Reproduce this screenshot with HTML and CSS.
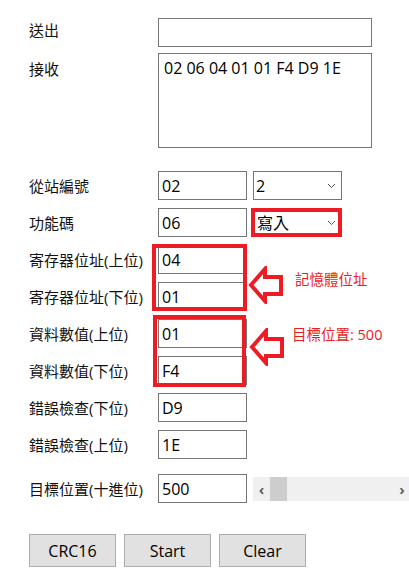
FILE: index.html
```html
<!DOCTYPE html>
<html lang="zh-Hant">
<head>
    <meta charset="UTF-8">
    <meta name="viewport" content="width=device-width, initial-scale=1.0">
    <title>Modbus 工具</title>
    <link rel="stylesheet" href="styles.css">
</head>
<body>
<div class="page">
    <div class="row row-send">
        <label class="lbl" for="send">送出</label>
        <input type="text" id="send" class="wide">
    </div>
    <div class="row row-recv">
        <label class="lbl" for="recv">接收</label>
        <textarea id="recv" class="wide">02 06 04 01 01 F4 D9 1E</textarea>
    </div>

    <div class="fields">
        <div class="row">
            <label class="lbl">從站編號</label>
            <input type="text" class="small" value="02">
            <span class="sel">
                <select><option>2</option></select>
                <svg class="chev" width="9" height="6" viewBox="0 0 9 6"><path d="M1 1 L4.5 4.5 L8 1" fill="none" stroke="#555" stroke-width="1"/></svg>
            </span>
        </div>
        <div class="row">
            <label class="lbl">功能碼</label>
            <input type="text" class="small" value="06">
            <span class="sel">
                <select class="marked"><option>寫入</option></select>
                <svg class="chev" width="9" height="6" viewBox="0 0 9 6"><path d="M1 1 L4.5 4.5 L8 1" fill="none" stroke="#555" stroke-width="1"/></svg>
            </span>
        </div>
        <div class="row">
            <label class="lbl">寄存器位址(上位)</label>
            <input type="text" class="small" value="04">
        </div>
        <div class="row">
            <label class="lbl">寄存器位址(下位)</label>
            <input type="text" class="small" value="01">
        </div>
        <div class="row">
            <label class="lbl">資料數值(上位)</label>
            <input type="text" class="small" value="01">
        </div>
        <div class="row">
            <label class="lbl">資料數值(下位)</label>
            <input type="text" class="small" value="F4">
        </div>
        <div class="row">
            <label class="lbl">錯誤檢查(下位)</label>
            <input type="text" class="small" value="D9">
        </div>
        <div class="row">
            <label class="lbl">錯誤檢查(上位)</label>
            <input type="text" class="small" value="1E">
        </div>
    </div>

    <div class="row row-target">
        <label class="lbl">目標位置(十進位)</label>
        <input type="text" class="small" value="500">
        <div class="hscroll">
            <span class="arr">&#8249;</span>
            <span class="thumb"></span>
            <span class="arr arr-r">&#8250;</span>
        </div>
    </div>

    <div class="buttons">
        <button class="btn">CRC16</button>
        <button class="btn">Start</button>
        <button class="btn">Clear</button>
    </div>

    <!-- annotations drawn over the form -->
    <div class="box box1"></div>
    <div class="box box2"></div>
    <svg class="arrow arrow1" width="36" height="38" viewBox="0 0 36 38"><polygon points="3,19 17,3 17,11 33,11 33,28 17,28 17,35" fill="none" stroke="#ed1c24" stroke-width="4" stroke-linejoin="miter"/></svg>
    <svg class="arrow arrow2" width="36" height="38" viewBox="0 0 36 38"><polygon points="3,19 17,3 17,11 33,11 33,28 17,28 17,35" fill="none" stroke="#ed1c24" stroke-width="4" stroke-linejoin="miter"/></svg>
    <div class="note note1">記憶體位址</div>
    <div class="note note2">目標位置: 500</div>
</div>
</body>
</html>
```

FILE: styles.css
```css
body {
    margin: 0;
    padding: 0;
    font-family: "Open Sans", "Noto Sans CJK TC", sans-serif;
    color: #000;
    background: #fff;
}
.page {
    position: relative;
    padding: 18px 0 0 29px;
    height: 559px;
}
.row {
    display: flex;
    align-items: center;
}
.lbl {
    width: 129px;
    flex: none;
    font-size: 15px;
    line-height: 20px;
    color: #111;
}
input, textarea, select {
    box-sizing: border-box;
    font-family: "Open Sans", "Noto Sans CJK TC", sans-serif;
    font-size: 16px;
    color: #000;
    border: 1px solid #767676;
    border-radius: 0;
    background: #fff;
    margin: 0;
}
input {
    height: 29px;
    padding: 0 3px;
}
.wide {
    width: 214px;
}
.small {
    width: 89px;
}
.row-send {
    align-items: flex-start;
    margin-bottom: 6px;
}
.row-send .lbl {
    padding-top: 2px;
}
.row-recv {
    align-items: flex-start;
    margin-bottom: 23px;
}
.row-recv .lbl {
    padding-top: 6px;
}
textarea {
    height: 95px;
    padding: 3px 5px;
    line-height: 22px;
    resize: none;
}
.fields {
    display: flex;
    flex-direction: column;
    gap: 8px;
}
.sel {
    position: relative;
    margin-left: 6px;
}
select {
    appearance: none;
    -webkit-appearance: none;
    width: 89px;
    height: 29px;
    padding: 0 2px;
    display: block;
}
select.marked {
    border: 4px solid #ed1c24;
    width: 91px;
    height: 29px;
    margin-left: -2px;
    padding: 0 2px;
}
.chev {
    position: absolute;
    right: 6px;
    top: 12px;
}
.row-target {
    margin-top: 15px;
}
.hscroll {
    position: relative;
    margin-left: 6px;
    width: 156px;
    height: 24px;
    background: #f0f0f0;
    display: flex;
    align-items: center;
}
.arr {
    width: 17px;
    text-align: center;
    font-size: 15px;
    font-weight: bold;
    color: #606060;
    line-height: 24px;
}
.arr-r {
    margin-left: auto;
    width: 14px;
}
.thumb {
    width: 17px;
    height: 24px;
    background: #cdcdcd;
}
.buttons {
    display: flex;
    gap: 8px;
    margin-top: 31px;
}
.btn {
    width: 87px;
    height: 33px;
    background: #e1e1e1;
    border: 1px solid #adadad;
    font-family: "Open Sans", "Noto Sans CJK TC", sans-serif;
    font-size: 16px;
    color: #000;
    padding: 0;
}
.box {
    position: absolute;
    box-sizing: border-box;
    border: 4px solid #ed1c24;
}
.box1 {
    left: 152px;
    top: 244px;
    width: 95px;
    height: 67px;
}
.box2 {
    left: 153px;
    top: 315px;
    width: 93px;
    height: 72px;
}
.arrow {
    position: absolute;
}
.arrow1 {
    left: 248px;
    top: 266px;
}
.arrow2 {
    left: 249px;
    top: 328px;
}
.note {
    position: absolute;
    font-size: 14.5px;
    line-height: 20px;
    color: #ed1c24;
}
.note1 {
    left: 295px;
    top: 270px;
}
.note2 {
    left: 292px;
    top: 325px;
}
```
